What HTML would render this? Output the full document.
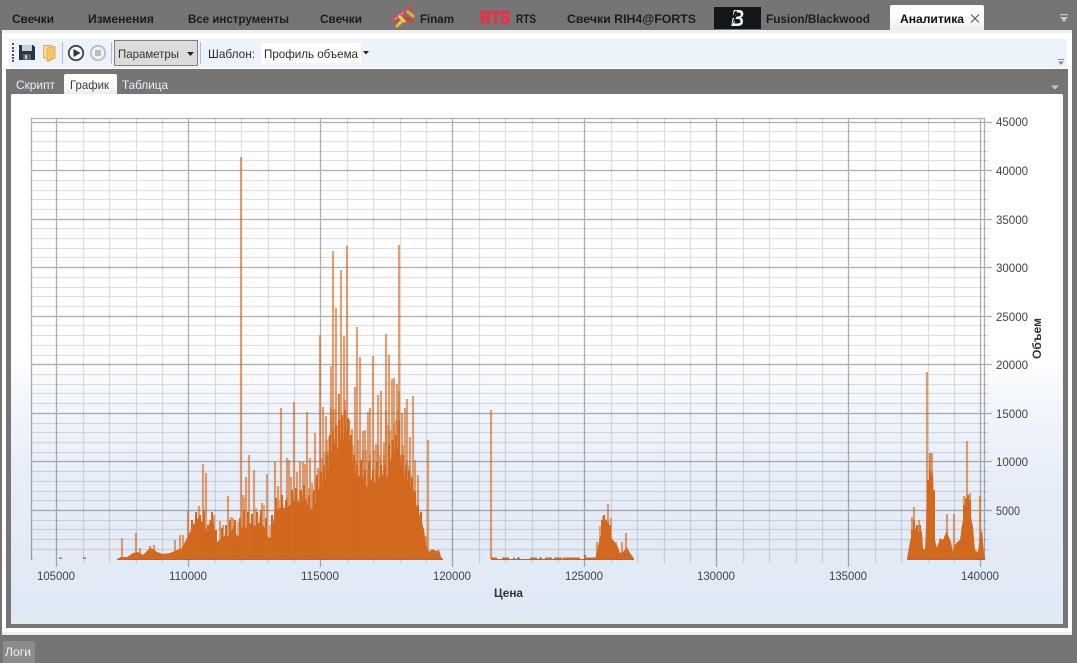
<!DOCTYPE html>
<html lang="ru"><head><meta charset="utf-8"><title>Аналитика</title>
<style>
html,body{margin:0;padding:0;background:#757575;width:1077px;height:663px;overflow:hidden}
svg{display:block}
text{font-family:"Liberation Sans",sans-serif;font-size:12px}
.t{font-weight:bold;fill:#1c1c1c}
.l{fill:#444}
.i{fill:#e6f0fa}
.d{fill:#2b2b2b}
</style></head><body>
<svg width="1077" height="663" viewBox="0 0 1077 663" xmlns="http://www.w3.org/2000/svg">
<defs>
<linearGradient id="bg" gradientUnits="userSpaceOnUse" x1="0" y1="94" x2="0" y2="623">
<stop offset="0" stop-color="#fff"/><stop offset=".49" stop-color="#fff"/><stop offset=".58" stop-color="#f3f6fc"/><stop offset=".72" stop-color="#e8eef9"/><stop offset="1" stop-color="#dfe8f5"/>
</linearGradient>
<linearGradient id="tab" x1="0" y1="0" x2="0" y2="1"><stop offset="0" stop-color="#fff"/><stop offset=".6" stop-color="#fafafa"/><stop offset="1" stop-color="#ececec"/></linearGradient>
</defs>
<rect width="1077" height="663" fill="#757575"/>
<!-- main panel -->
<rect x="2" y="30" width="1070" height="605" fill="#fff"/>
<rect x="2" y="30" width="1070" height="3" fill="#f0f0f0"/>
<rect x="2" y="632" width="1070" height="3" fill="#efefef"/>
<!-- top tabs -->
<path d="M890 30V7q0-2 2-2h90q2 0 2 2V30z" fill="url(#tab)"/>
<text class="t" x="12" y="23" textLength="42" lengthAdjust="spacingAndGlyphs">Свечки</text>
<text class="t" x="88" y="23" textLength="66" lengthAdjust="spacingAndGlyphs">Изменения</text>
<text class="t" x="188" y="23" textLength="101" lengthAdjust="spacingAndGlyphs">Все инструменты</text>
<text class="t" x="320" y="23" textLength="42" lengthAdjust="spacingAndGlyphs">Свечки</text>
<!-- Finam logo -->
<g fill="none" stroke-width="3.2" stroke-linecap="round">
<path d="M393 20L405 11" stroke="#e8485a"/>
<path d="M397 26L403 20" stroke="#efb02c"/>
<path d="M408 12L413 16" stroke="#eca832"/>
<path d="M405 18L412 21" stroke="#d8402c"/>
<path d="M400 17L404 21" stroke="#f0c848"/>
<path d="M409 7L411 9" stroke="#d84a30"/>
</g>
<path d="M395 19L403 13M399 24L402 21" stroke="#f6e6d8" stroke-width=".8" stroke-dasharray="2 2" fill="none"/>
<text class="t" x="420" y="23" textLength="34" lengthAdjust="spacingAndGlyphs">Finam</text>
<text x="480" y="24" textLength="30" lengthAdjust="spacingAndGlyphs" style="font-size:18px;font-weight:bold;fill:#e83048;stroke:#e83048;stroke-width:1.1">RTS</text>
<text class="t" x="516" y="23" textLength="20" lengthAdjust="spacingAndGlyphs">RTS</text>
<text class="t" x="567" y="23" textLength="129" lengthAdjust="spacingAndGlyphs">Свечки RIH4@FORTS</text>
<rect x="714" y="7" width="47" height="22" fill="#13171b"/>
<text x="731" y="26" textLength="13" lengthAdjust="spacingAndGlyphs" style="font-size:23px;font-weight:bold;font-style:italic;fill:#f4f4f4">B</text>
<path d="M735 11L732 18L734 18L732 25L737 16L735 16L737 11z" fill="#13171b"/>
<text class="t" x="766" y="23" textLength="104" lengthAdjust="spacingAndGlyphs">Fusion/Blackwood</text>
<text x="900" y="23" textLength="64" lengthAdjust="spacingAndGlyphs" style="font-weight:bold;fill:#111">Аналитика</text>
<path d="M971 14.5L979 22.5M979 14.5L971 22.5" stroke="#555" stroke-width="1.1" fill="none"/>
<path d="M1060 14h8v1.2h-8zM1060 17h8l-4 5z" fill="#c8c8c8"/>
<!-- toolbar -->
<path d="M9 41q0-2 2-2H1067V68H11q-2 0-2-2z" fill="#edf3fb"/>
<g fill="#555"><rect x="12" y="43" width="2" height="2"/><rect x="12" y="47" width="2" height="2"/><rect x="12" y="50" width="2" height="2"/><rect x="12" y="54" width="2" height="2"/><rect x="12" y="57" width="2" height="2"/><rect x="12" y="60" width="2" height="2"/></g>
<!-- save -->
<path d="M19 45H33L35 47V60H19z" fill="#2e3440"/>
<rect x="22" y="45" width="10" height="6" fill="#c9ced6"/>
<rect x="23" y="54" width="8" height="6" fill="#5a606c"/>
<rect x="25" y="55" width="2" height="4" fill="#c8ccd2"/>
<!-- folder -->
<rect x="43.500" y="45.500" width="8" height="12.500" fill="#f8dc9e" stroke="#dcae5c"/>
<path d="M47 48L55 46.500V58L49 61H47z" fill="#f5c566" stroke="#dca448" stroke-width=".8"/>
<rect x="62" y="42" width="1" height="22" fill="#b4bcc6"/>
<!-- play / stop -->
<circle cx="76" cy="53" r="7.2" fill="#f4f6f8" stroke="#444" stroke-width="1.8"/>
<path d="M73.500 49L80.500 53L73.500 57z" fill="#333"/>
<circle cx="98" cy="53" r="7.2" fill="#eef1f5" stroke="#bcbcbc" stroke-width="1.8"/>
<rect x="95" y="50" width="6" height="6" fill="#bcbcbc"/>
<rect x="111" y="42" width="1" height="22" fill="#b4bcc6"/>
<!-- params button -->
<rect x="114.500" y="40.500" width="83" height="25" fill="#dcdcdc" stroke="#808080"/>
<text class="d" x="118" y="58" textLength="61" lengthAdjust="spacingAndGlyphs" style="fill:#333">Параметры</text>
<path d="M187 52h7l-3.500 4z" fill="#222"/>
<rect x="200" y="42" width="1" height="22" fill="#b4bcc6"/>
<text class="d" x="208" y="58" textLength="47" lengthAdjust="spacingAndGlyphs">Шаблон:</text>
<rect x="261" y="43" width="112" height="20" fill="#fff"/>
<rect x="361" y="43" width="12" height="20" fill="#f0f4fa"/>
<text class="d" x="264" y="58" textLength="94" lengthAdjust="spacingAndGlyphs">Профиль объема</text>
<path d="M363 51h6l-3 3.500z" fill="#222"/>
<path d="M1058 59h6v1h-6zM1058 61.500h6l-3 3.500z" fill="#8a8a8a"/>
<!-- inner gray -->
<rect x="6" y="69" width="1062" height="559" fill="#757575"/>
<path d="M64 94V76q0-2 2-2h49q2 0 2 2V94z" fill="url(#tab)"/>
<text class="i" x="16" y="89" textLength="39" lengthAdjust="spacingAndGlyphs">Скрипт</text>
<text x="70" y="89" textLength="39" lengthAdjust="spacingAndGlyphs" style="fill:#3a3a3a">График</text>
<text class="i" x="122" y="89" textLength="46" lengthAdjust="spacingAndGlyphs">Таблица</text>
<path d="M1051 85.500h8l-4 4z" fill="#c8c8c8"/>
<path d="M11 96q0-2 2-2H1061q2 0 2 2V624H11z" fill="#e9e9e9"/>
<path d="M11 96q0-2 2-2H1061q2 0 2 2V622H11z" fill="url(#bg)"/>
<!-- minor grid -->
<path fill="none" stroke="#000" stroke-opacity=".12" stroke-width="1.3" d="M31 549.500H989M31 539.500H989M31 529.500H989M31 520.500H989M31 500.500H989M31 491.500H989M31 481.500H989M31 471.500H989M31 452.500H989M31 442.500H989M31 432.500H989M31 423.500H989M31 403.500H989M31 393.500H989M31 384.500H989M31 374.500H989M31 355.500H989M31 345.500H989M31 335.500H989M31 325.500H989M31 306.500H989M31 296.500H989M31 287.500H989M31 277.500H989M31 257.500H989M31 248.500H989M31 238.500H989M31 228.500H989M31 209.500H989M31 199.500H989M31 190.500H989M31 180.500H989M31 160.500H989M31 151.500H989M31 141.500H989M31 131.500H989M83.500 118V563M109.500 118V563M136.500 118V563M162.500 118V563M215.500 118V563M241.500 118V563M268.500 118V563M294.500 118V563M347.500 118V563M373.500 118V563M400.500 118V563M426.500 118V563M479.500 118V563M505.500 118V563M532.500 118V563M558.500 118V563M611.500 118V563M637.500 118V563M664.500 118V563M690.500 118V563M743.500 118V563M769.500 118V563M796.500 118V563M822.500 118V563M875.500 118V563M901.500 118V563M928.500 118V563M954.500 118V563"/>
<!-- major grid -->
<path fill="none" stroke="#000" stroke-opacity=".31" stroke-width="1.3" d="M31 510.500H992M31 461.500H992M31 413.500H992M31 364.500H992M31 316.500H992M31 267.500H992M31 219.500H992M31 170.500H992M31 122.500H992M31 118.500H985M31.500 118V560M984.500 118V560M56.500 118V567M188.500 118V567M320.500 118V567M452.500 118V567M584.500 118V567M716.500 118V567M848.500 118V567M980.500 118V567"/>
<!-- bars: solid mass -->
<g fill="#d2691e">
<polygon points="117,559 121,557 127,557 133,553 138,552 143,555 147,551 150,548 153,549 157,552 163,554 170,553 177,550 182,548 187,538 190,532 193,525 198,518 201,521 203,522 207,532 210,522 213,520 217,542 220,540 225,535 228,537 233,528 238,537 243,525 246,528 250,523 255,526 260,522 265,528 268,537 271,538 273,524 275,510 280,508 285,508 290,505 295,500 300,502 305,499 308,505 312,510 315,505 318,490 322,486 325,480 328,472 331,452 335,440 338,450 341,435 344,440 347,428 350,445 353,465 356,475 360,476 364,478 367,488 371,480 375,483 379,478 383,475 387,478 391,458 395,452 399,445 402,470 405,478 410,485 413,490 416,503 418,512 421,518 424,530 426,545 429,552 432,549 436,551 439,550 441,557 443,559"/>
<polygon points="595,559 597,552 600,537 603,528 606,532 609,533 613,540 617,545 620,553 623,552 627,547 630,553 633,557 634,559"/>
<polygon points="907,559 908,553 910,541 912,535 914,527 917,530 919,533 922,531 923,548 925,550 927,505 930,485 933,478 934,500 935,540 937,548 940,538 943,540 947,530 948,535 951,542 953,552 955,545 957,542 960,540 962,525 964,515 966,510 968,505 970,512 973,527 975,550 978,552 980,535 982,530 984,553 985,559"/>
<path d="M59 557.500h3V559h-3zM83 557.500h3V559h-3zM31 557.500h1.500V559H31zM491 557.500h6V559h-6zM502 557.500h7V559h-7zM513 557.500h2V559h-2zM517 557.500h3V559h-3zM530 557.500h7V559h-7zM539 557.500h3V559h-3zM545 557.500h7V559h-7zM554 557.500h8V559h-8zM563 557.500h17V559h-17zM584 555h2v4h-2zM586 557.500h10V559h-10z"/>
</g>
<!-- jagged top of the solid mass -->
<path fill="none" stroke="#d2691e" stroke-width="2" d="M192 559V520M196 559V512M200 559V515M204 559V510M208 559V525M212 559V512M216 559V530M222 559V528M226 559V525M230 559V520M235 559V520M240 559V518M244 559V510M248 559V512M252 559V514M257 559V512M261 559V510M266 559V518M272 559V515M276 559V498M282 559V495M286 559V500M292 559V490M296 559V488M301 559V490M304 559V485M309 559V495M314 559V490M317 559V475M321 559V472M324 559V465M327 559V455M330 559V435M333 559V430M336 559V425M339 559V420M342 559V415M345 559V410M348 559V418M351 559V435M354 559V455M357 559V465M361 559V460M365 559V470M369 559V462M373 559V470M377 559V462M381 559V465M385 559V465M389 559V445M393 559V440M396 559V435M399 559V420M403 559V455M406 559V465M409 559V470M412 559V478M415 559V492M418 559V505M421 559V512M602 559V520M604 559V515M606 559V520M608 559V522M610 559V525M912 559V530M914 559V520M917 559V525M920 559V525M928 559V480M930 559V470M932 559V475M934 559V490M964 559V505M966 559V498M968 559V495M970 559V500"/>
<!-- mid spikes -->
<path fill="none" stroke="#d2691e" stroke-width="2.2" stroke-opacity=".5" d="M234 559V525M238 559V522M252 559V518M256 559V508M260 559V515M264 559V505M270 559V525M277 559V510M279 559V500M283 559V505M287 559V497M291 559V505M293 559V495M297 559V498M300 559V490M303 559V495M306 559V498M309 559V488M313 559V493M316 559V478M320 559V470M322 559V458M325 559V452M327 559V440M329 559V437M331 559V407M333 559V410M335 559V409M337 559V425M339 559V394M341 559V420M343 559V417M345 559V400M347 559V420M349 559V420M351 559V447M353 559V445M356 559V460M358 559V440M361 559V465M363 559V450M366 559V450M368 559V470M370 559V455M372 559V478M374 559V450M376 559V470M378 559V445M380 559V455M382 559V470M384 559V455M386 559V410M388 559V425M390 559V430M392 559V440M394 559V425M396 559V420M398 559V410M399 559V391M401 559V455M403 559V445M405 559V470M407 559V460M409 559V465M411 559V475M413 559V490M415 559V490M600 559V526M603 559V516M605 559V519M611 559V518M930 559V453M932 559V472"/>
<!-- tall spikes -->
<path fill="none" stroke="#d2691e" stroke-width="2.2" stroke-opacity=".62" d="M122 559V538M136 559V533M140 559V548M150 559V546M154 559V545M175 559V540M180 559V535M183 559V535M188 559V510M199 559V506M203 559V464M206 559V473M210 559V520M214 559V515M220 559V521M223 559V525M228 559V496M231 559V517M233 559V518M241 559V157M243 559V495M245 559V498M246 559V477M249 559V455M254 559V470M262 559V503M267 559V474M275 559V462M278 559V486M281 559V408M287 559V458M289 559V460M291 559V477M294 559V402M297 559V472M300 559V462M303 559V462M305 559V464M307 559V412M310 559V458M312 559V483M315 559V433M318 559V468M320 559V335M323 559V407M326 559V416M328 559V451M331 559V366M333 559V251M336 559V308M339 559V394M341 559V270M344 559V336M347 559V246M349 559V420M352 559V429M355 559V387M357 559V327M360 559V357M363 559V431M365 559V430M368 559V412M370 559V408M373 559V356M376 559V444M378 559V395M381 559V391M384 559V442M386 559V334M389 559V355M392 559V379M394 559V378M397 559V384M399 559V245M402 559V413M405 559V408M407 559V399M410 559V437M413 559V396M415 559V460M418 559V475M421 559V512M423 559V529M426 559V536M428 559V440M491 559V410M597 559V542M608 559V504M616 559V542M622 559V542M626 559V533M912 559V517M914 559V507M919 559V520M927 559V372M930 559V453M932 559V453M947 559V514M954 559V514M964 559V496M967 559V441M970 559V493M980 559V496"/>
<path fill="none" stroke="#6e4a30" stroke-opacity=".75" d="M117 559.500H443M491 559.500H634M907 559.500H985"/>
<!-- labels -->
<g class="l">
<text class="l" x="996" y="126" textLength="32" lengthAdjust="spacingAndGlyphs">45000</text>
<text class="l" x="996" y="175" textLength="32" lengthAdjust="spacingAndGlyphs">40000</text>
<text class="l" x="996" y="224" textLength="32" lengthAdjust="spacingAndGlyphs">35000</text>
<text class="l" x="996" y="272" textLength="32" lengthAdjust="spacingAndGlyphs">30000</text>
<text class="l" x="996" y="321" textLength="32" lengthAdjust="spacingAndGlyphs">25000</text>
<text class="l" x="996" y="369" textLength="32" lengthAdjust="spacingAndGlyphs">20000</text>
<text class="l" x="996" y="418" textLength="32" lengthAdjust="spacingAndGlyphs">15000</text>
<text class="l" x="996" y="466" textLength="32" lengthAdjust="spacingAndGlyphs">10000</text>
<text class="l" x="996" y="515" textLength="24" lengthAdjust="spacingAndGlyphs">5000</text>
<text class="l" x="37" y="580" textLength="38" lengthAdjust="spacingAndGlyphs">105000</text>
<text class="l" x="169" y="580" textLength="38" lengthAdjust="spacingAndGlyphs">110000</text>
<text class="l" x="301" y="580" textLength="38" lengthAdjust="spacingAndGlyphs">115000</text>
<text class="l" x="433" y="580" textLength="38" lengthAdjust="spacingAndGlyphs">120000</text>
<text class="l" x="565" y="580" textLength="38" lengthAdjust="spacingAndGlyphs">125000</text>
<text class="l" x="697" y="580" textLength="38" lengthAdjust="spacingAndGlyphs">130000</text>
<text class="l" x="829" y="580" textLength="38" lengthAdjust="spacingAndGlyphs">135000</text>
<text class="l" x="961" y="580" textLength="38" lengthAdjust="spacingAndGlyphs">140000</text>
</g>
<text x="494" y="597" textLength="29" lengthAdjust="spacingAndGlyphs" style="font-weight:bold;fill:#333">Цена</text>
<text transform="translate(1041 359) rotate(-90)" x="0" y="0" textLength="41" lengthAdjust="spacingAndGlyphs" style="font-weight:bold;fill:#333">Объем</text>
<!-- bottom tab -->
<path d="M3 663V643q0-2 2-2H33q2 0 2 2V663z" fill="#8c8c8c"/>
<text x="5" y="656" textLength="26" lengthAdjust="spacingAndGlyphs" style="fill:#f0f0f0">Логи</text>
</svg>
</body></html>
